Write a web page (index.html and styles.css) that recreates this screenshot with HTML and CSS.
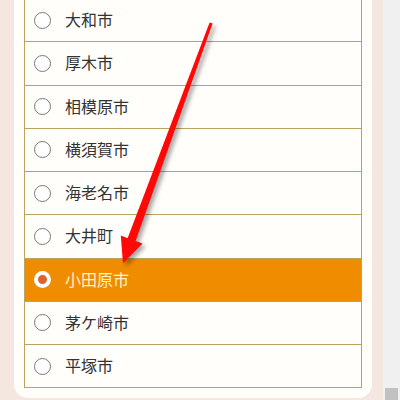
FILE: index.html
```html
<!DOCTYPE html>
<html lang="ja">
<head>
    <meta charset="UTF-8">
    <meta name="viewport" content="width=device-width, initial-scale=1.0">
    <title>市町村を選択</title>
    <link rel="stylesheet" href="styles.css">
</head>
<body>
    <div class="screen">
        <div class="main">
            <div class="card">
                <ul class="list">
                    <li class="row"><span class="radio"></span><span class="label">大和市</span></li>
                    <li class="row"><span class="radio"></span><span class="label">厚木市</span></li>
                    <li class="row"><span class="radio"></span><span class="label">相模原市</span></li>
                    <li class="row"><span class="radio"></span><span class="label">横須賀市</span></li>
                    <li class="row"><span class="radio"></span><span class="label">海老名市</span></li>
                    <li class="row"><span class="radio"></span><span class="label">大井町</span></li>
                    <li class="row selected"><span class="radio"></span><span class="label">小田原市</span></li>
                    <li class="row"><span class="radio"></span><span class="label">茅ケ崎市</span></li>
                    <li class="row"><span class="radio"></span><span class="label">平塚市</span></li>
                </ul>
            </div>
        </div>
        <div class="scrollbar">
            <div class="thumb"></div>
        </div>

        <!-- flecha roja encima de la lista -->
        <svg class="arrow" width="400" height="400" viewBox="0 0 400 400">
            <polygon points="209.6,22.5 212.6,23.6 135.6,241 142.5,243.5 123,263.5 120.8,235.5 127.6,238.2" fill="#ff0808" />
        </svg>
    </div>
</body>
</html>
```

FILE: styles.css
```css
body {
    margin: 0;
    padding: 0;
    background-color: #f3e7df;
    font-family: "Noto Sans CJK JP", "Noto Sans", sans-serif;
}

.screen {
    position: relative;
    display: flex;
    width: 400px;
    height: 400px;
    overflow: hidden;
}

.main {
    flex: 1;
    padding: 0 11px 0 14px;
}

.card {
    margin-top: -1px;
    padding: 0 10px 10px;
    background-color: #fffefb;
    border-radius: 0 0 14px 14px;
}

.list {
    list-style: none;
    margin: 0;
    padding: 0;
    border: 1px solid #b9a35e;
    border-top: none;
}

.row {
    display: flex;
    align-items: center;
    gap: 14px;
    height: 42.25px;
    padding-left: 9px;
    border-bottom: 1px solid #b9a35e;
    background-color: #fffefb;
    font-size: 16px;
    color: #333;
}

.row:last-child {
    border-bottom: none;
}

.radio {
    width: 17px;
    height: 17px;
    box-sizing: border-box;
    border: 1px solid #7a7a7a;
    border-radius: 50%;
    background-color: #fff;
}

.label {
    line-height: 1;
    padding-bottom: 2px;
}

.row.selected {
    background-color: #ef8c00;
    color: #fff3cc;
}

.row.selected .radio {
    border: 4px solid #fff;
    background-color: #e0622c;
}

.scrollbar {
    width: 17px;
    background-color: #f0f0f0;
    display: flex;
    flex-direction: column;
    justify-content: flex-end;
    align-items: center;
}

.thumb {
    width: 13px;
    height: 12px;
    background-color: #c1c1c1;
}

.arrow {
    position: absolute;
    left: 0;
    top: 0;
    filter: drop-shadow(3px 3px 2px rgba(0, 0, 0, 0.35));
}
```
